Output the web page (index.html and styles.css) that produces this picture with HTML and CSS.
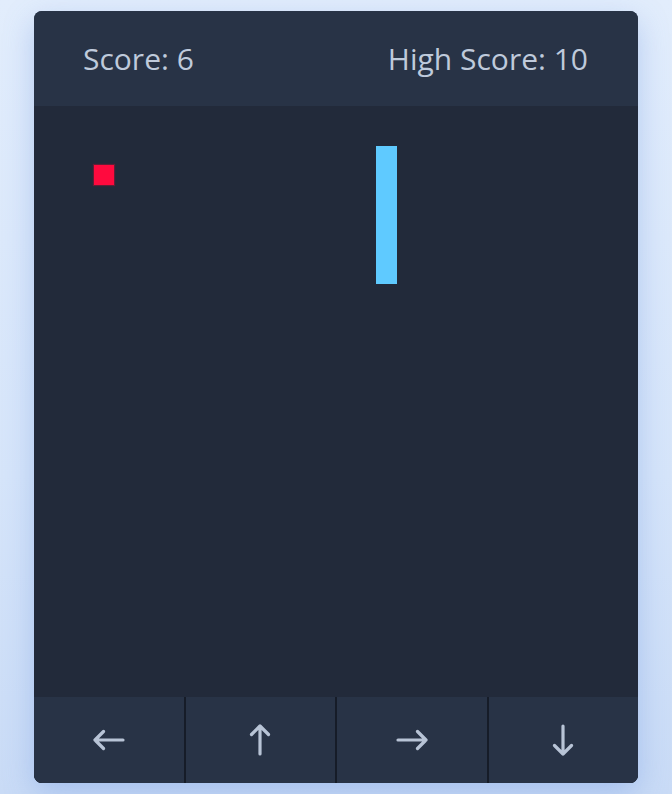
FILE: index.html
```html
<!DOCTYPE html>
<html lang="en">
<head>
<meta charset="utf-8">
<title>Snake</title>
<link rel="stylesheet" href="styles.css">
</head>
<body>
  <div class="card">
    <header class="scorebar">
      <span class="score">Score: 6</span>
      <span class="score">High Score: 10</span>
    </header>
    <div class="board">
      <div class="food"></div>
      <div class="snake"></div>
    </div>
    <nav class="controls">
      <button class="btn" aria-label="Left"><svg class="arrow" viewBox="0 0 32 32"><path d="M30 16H2M10.5 7.5L2 16l8.5 8.5"/></svg></button>
      <button class="btn" aria-label="Up"><svg class="arrow up" viewBox="0 0 32 32"><path d="M30 16H2M10.5 7.5L2 16l8.5 8.5"/></svg></button>
      <button class="btn" aria-label="Right"><svg class="arrow right" viewBox="0 0 32 32"><path d="M30 16H2M10.5 7.5L2 16l8.5 8.5"/></svg></button>
      <button class="btn" aria-label="Down"><svg class="arrow down" viewBox="0 0 32 32"><path d="M30 16H2M10.5 7.5L2 16l8.5 8.5"/></svg></button>
    </nav>
  </div>
</body>
</html>
```

FILE: styles.css
```css
html, body {
  margin: 0;
  height: 100%;
}
body {
  background: linear-gradient(180deg, #e2edfc 0%, #d6e5fa 60%, #c9dbf6 100%);
  font-family: "Open Sans", "Noto Sans", sans-serif;
  padding-top: 11px;
  box-sizing: border-box;
  overflow: hidden;
}
.card {
  width: 604px;
  margin: 0 auto;
  border-radius: 8px;
  overflow: hidden;
  background: #283346;
  box-shadow: 0 10px 30px rgba(96, 140, 220, 0.35);
  display: flex;
  flex-direction: column;
}
.scorebar {
  height: 95px;
  background: #283346;
  display: flex;
  align-items: center;
  justify-content: space-between;
  padding: 0 50px 0 49px;
  box-sizing: border-box;
}
.score {
  color: #bfcadb;
  font-size: 30px;
  line-height: 1;
}
.board {
  position: relative;
  height: 591px;
  background: #222a3a;
}
.food {
  position: absolute;
  left: 60px;
  top: 59px;
  width: 20px;
  height: 20px;
  background: #ff0a3e;
  box-shadow: 0 0 1px 1px rgba(160, 20, 50, 0.5);
}
.snake {
  position: absolute;
  left: 342px;
  top: 40px;
  width: 21px;
  height: 138px;
  background: #5fcaff;
}
.controls {
  display: grid;
  grid-template-columns: repeat(4, 1fr);
  gap: 2px;
  background: #161c28;
  height: 86px;
}
.btn {
  border: 0;
  margin: 0;
  background: #283346;
  display: flex;
  align-items: center;
  justify-content: center;
  padding: 0;
}
.arrow {
  width: 32px;
  height: 32px;
  fill: none;
  stroke: #b8c4d6;
  stroke-width: 3.2;
  stroke-linecap: round;
  stroke-linejoin: round;
}
.arrow.up { transform: rotate(90deg); }
.arrow.right { transform: rotate(180deg); }
.arrow.down { transform: rotate(-90deg); }
```
